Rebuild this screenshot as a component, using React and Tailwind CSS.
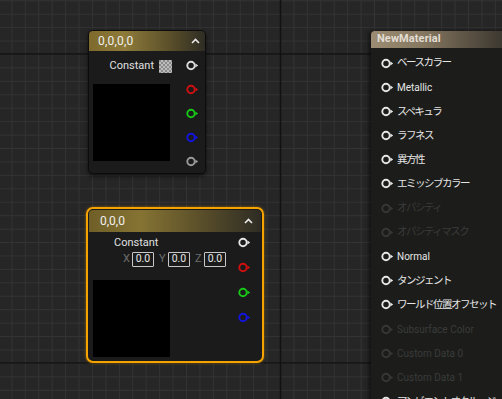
import React from 'react';

const FONT = "font-['Roboto','Noto_Sans_CJK_JP',sans-serif]";

function Pin({ color = '#d8d8d8' }) {
  return (
    <svg width="13" height="11" viewBox="0 0 13 11" className="shrink-0 block">
      <circle cx="5" cy="5.5" r="3.7" fill="none" stroke={color} strokeWidth="1.9" />
      <path d="M9.4 3.6 L12.2 5.5 L9.4 7.4 Z" fill={color} />
    </svg>
  );
}

function Chevron() {
  return (
    <svg width="9" height="6" viewBox="0 0 9 6" className="block">
      <path d="M1 5 L4.5 1.5 L8 5" fill="none" stroke="#e8e8e8" strokeWidth="1.6" />
    </svg>
  );
}

function Checker() {
  return (
    <svg width="13" height="13" viewBox="0 0 13 13" className="block">
      <rect width="13" height="13" fill="#bdbdbd" />
      {[0, 1, 2, 3, 4, 5, 6].map((r) =>
        [0, 1, 2, 3, 4, 5, 6].map((c) =>
          (r + c) % 2 === 0 ? <rect key={r + '-' + c} x={c * 2} y={r * 2} width="2" height="2" fill="#8a8a8a" /> : null
        )
      )}
    </svg>
  );
}

function Grid() {
  const lines = [];
  const step = 13.43;
  for (let i = -1; i < 40; i++) {
    const x = 280.5 - 21 * step + i * step;
    lines.push(<line key={'v' + i} x1={x} y1="0" x2={x} y2="399" stroke="#343434" strokeWidth="1" />);
    const y = 54.5 - 5 * step + i * step;
    lines.push(<line key={'h' + i} x1="0" y1={y} x2="502" y2={y} stroke="#343434" strokeWidth="1" />);
  }
  return (
    <svg className="absolute inset-0" width="502" height="399">
      {lines}
      <line x1="280.5" y1="0" x2="280.5" y2="399" stroke="#121212" strokeWidth="1.5" />
      <line x1="0" y1="54" x2="502" y2="54" stroke="#121212" strokeWidth="1.5" />
      <line x1="0" y1="363" x2="502" y2="363" stroke="#141414" strokeWidth="1.5" />
    </svg>
  );
}

function VectorNode() {
  return (
    <div className="absolute left-[88px] top-[30px] w-[118px] h-[144px] rounded-[5px] bg-[#1a1b1a] border border-[#0c0c0c] shadow-[0_2px_4px_rgba(0,0,0,0.6)] overflow-hidden">
      <div className="h-[20px] flex items-center justify-between pl-[9px] pr-[5px] bg-[linear-gradient(90deg,#7d6a2c_0%,#8e7b3a_30%,#5a4f2a_70%,#2e2c24_100%)]">
        <span className="text-[12px] text-[#f0f0f0] tracking-[0.2px]">0,0,0,0</span>
        <Chevron />
      </div>
      <div className="flex">
        <div className="w-[97px] flex flex-col">
          <div className="mt-[8px] h-[14px] flex items-center justify-end gap-[5px] pr-[14px]">
            <span className="text-[11px] text-[#e0e0e0]">Constant</span>
            <Checker />
          </div>
          <div className="mt-[11px] ml-[4px] w-[77px] h-[77px] bg-black" />
        </div>
        <div className="flex flex-col gap-[13px] pt-[9px]">
          <Pin color="#dcdcdc" />
          <Pin color="#d01010" />
          <Pin color="#18c818" />
          <Pin color="#1414e0" />
          <Pin color="#9a9a9a" />
        </div>
      </div>
    </div>
  );
}

function Field({ label, value }) {
  return (
    <div className="flex items-center gap-[2px]">
      <span className="w-[7px] text-[11px] text-[#6e6e6e]">{label}</span>
      <div className="w-[22px] h-[15px] border border-[#c8c8c8] rounded-[1px] flex items-center justify-center text-[10.5px] text-[#e8e8e8]">
        {value}
      </div>
    </div>
  );
}

function Vector3Node() {
  return (
    <div className="absolute left-[86px] top-[207px] w-[178px] h-[156px] rounded-[7px] border-2 border-[#f5a300] bg-[#1a1b1a] p-[1px] shadow-[0_0_3px_rgba(245,163,0,0.5)]">
      <div className="h-full w-full rounded-[4px] overflow-hidden bg-[#1a1b1a]">
        <div className="h-[22px] flex items-center justify-between pl-[11px] pr-[8px] bg-[linear-gradient(90deg,#6f5f28_0%,#857333_30%,#5a4f2a_65%,#2e2c24_100%)]">
          <span className="text-[12px] text-[#f0f0f0]">0,0,0</span>
          <Chevron />
        </div>
        <div className="flex">
          <div className="w-[149px] flex flex-col">
            <div className="mt-[4px] ml-[25px] text-[11px] leading-[14px] text-[#e0e0e0]">Constant</div>
            <div className="mt-[1px] ml-[34px] flex gap-[5px]">
              <Field label="X" value="0.0" />
              <Field label="Y" value="0.0" />
              <Field label="Z" value="0.0" />
            </div>
            <div className="mt-[12px] ml-[4px] w-[77px] h-[77px] bg-black" />
          </div>
          <div className="flex flex-col gap-[14px] pt-[5px]">
            <Pin color="#e4e4e4" />
            <Pin color="#d01010" />
            <Pin color="#18c818" />
            <Pin color="#1414e0" />
          </div>
        </div>
      </div>
    </div>
  );
}

const rows = [
  ['ベースカラー', true, true],
  ['Metallic', true, false],
  ['スペキュラ', true, true],
  ['ラフネス', true, true],
  ['異方性', true, true],
  ['エミッシブカラー', true, true],
  ['オパシティ', false, true],
  ['オパシティマスク', false, true],
  ['Normal', true, false],
  ['タンジェント', true, true],
  ['ワールド位置オフセット', true, true],
  ['Subsurface Color', false, false],
  ['Custom Data 0', false, false],
  ['Custom Data 1', false, false],
  ['アンビエントオクルージョン', true, true],
];

function MaterialNode() {
  return (
    <div className="absolute left-[371px] top-[31px] w-[150px] h-[400px] rounded-tl-[4px] bg-[#1c1d1b] shadow-[-2px_0_4px_rgba(0,0,0,0.6)] overflow-hidden">
      <div className="h-[17px] flex items-center pl-[6px] bg-[linear-gradient(90deg,#9c8c73_0%,#857760_35%,#4d463b_75%,#2c2a26_100%)]">
        <span className="text-[11px] font-bold text-[#e2ddd4] tracking-[0.1px]">NewMaterial</span>
      </div>
      <div className="flex flex-col pt-[8px] gap-[10.2px]">
        {rows.map(([label, on, jp]) => (
          <div key={label} className="h-[14px] flex items-center pl-[10px] gap-[3px]">
            <Pin color={on ? '#e6e6e6' : '#363736'} />
            <span
              className={`whitespace-nowrap ${jp ? 'text-[10.5px] tracking-[-1.5px]' : 'text-[10px]'} ${on ? 'text-[#e6e6e6]' : 'text-[#3a3b3a]'}`}
            >
              {label}
            </span>
          </div>
        ))}
      </div>
    </div>
  );
}

export default function App() {
  return (
    <div className={`relative w-[502px] h-[399px] overflow-hidden bg-[#262626] ${FONT}`}>
      <Grid />
      <VectorNode />
      <Vector3Node />
      <MaterialNode />
    </div>
  );
}
